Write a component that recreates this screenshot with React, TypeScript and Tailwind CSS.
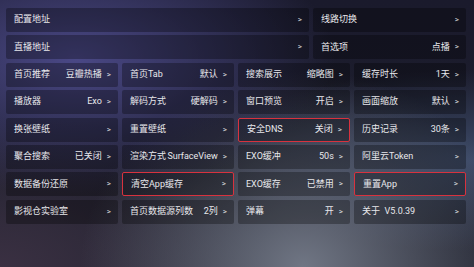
import React from "react";

type Cell = { label: string; value?: string; active?: boolean };

const GRID: Cell[][] = [
  [
    { label: "首页推荐", value: "豆瓣热播" },
    { label: "首页Tab", value: "默认" },
    { label: "搜索展示", value: "缩略图" },
    { label: "缓存时长", value: "1天" },
  ],
  [
    { label: "播放器", value: "Exo" },
    { label: "解码方式", value: "硬解码" },
    { label: "窗口预览", value: "开启" },
    { label: "画面缩放", value: "默认" },
  ],
  [
    { label: "换张壁纸" },
    { label: "重置壁纸" },
    { label: "安全DNS", value: "关闭", active: true },
    { label: "历史记录", value: "30条" },
  ],
  [
    { label: "聚合搜索", value: "已关闭" },
    { label: "渲染方式", value: "SurfaceView" },
    { label: "EXO缓冲", value: "50s" },
    { label: "阿里云Token" },
  ],
  [
    { label: "数据备份还原" },
    { label: "清空App缓存", active: true },
    { label: "EXO缓存", value: "已禁用" },
    { label: "重置App", active: true },
  ],
  [
    { label: "影视仓实验室" },
    { label: "首页数据源列数", value: "2列" },
    { label: "弹幕", value: "开" },
    { label: "关于  V5.0.39" },
  ],
];

function Item({ cell, className = "" }: { cell: Cell; className?: string }) {
  return (
    <div
      className={
        "flex h-[24px] items-center justify-between rounded-[2px] bg-black/30 pl-[8px] pr-[7px] " +
        (cell.active ? "border-[1.5px] border-[#d8323e] " : "") +
        className
      }
    >
      <span className="whitespace-pre">{cell.label}</span>
      <span className="flex items-center gap-[5px]">
        {cell.value && <span>{cell.value}</span>}
        <span className="text-[8px] text-white/85">&gt;</span>
      </span>
    </div>
  );
}

export default function App() {
  return (
    <div className="h-[267px] w-[474px] overflow-hidden bg-[radial-gradient(ellipse_at_16%_22%,#4a4886_0%,transparent_46%),radial-gradient(ellipse_at_64%_100%,#707684_0%,transparent_52%),radial-gradient(ellipse_at_100%_60%,#3c4a68_0%,transparent_40%),radial-gradient(ellipse_at_0%_100%,#3a3042_0%,transparent_40%),linear-gradient(180deg,#1a1a2c_0%,#20222e_100%)] font-['Roboto','Noto_Sans_CJK_SC',sans-serif] text-[9px] text-[#e8e8ec]">
      <div className="flex flex-col gap-[3.4px] pl-[6px] pr-[8px] pt-[8px]">
        <div className="flex gap-[4px]">
          <Item cell={{ label: "配置地址" }} className="w-[303px]" />
          <Item cell={{ label: "线路切换" }} className="flex-1" />
        </div>
        <div className="flex gap-[4px]">
          <Item cell={{ label: "直播地址" }} className="w-[303px]" />
          <Item cell={{ label: "首选项", value: "点播" }} className="flex-1" />
        </div>
        {GRID.map((row, i) => (
          <div key={i} className="grid grid-cols-4 gap-[4px]">
            {row.map((cell) => (
              <Item key={cell.label} cell={cell} />
            ))}
          </div>
        ))}
      </div>
    </div>
  );
}
